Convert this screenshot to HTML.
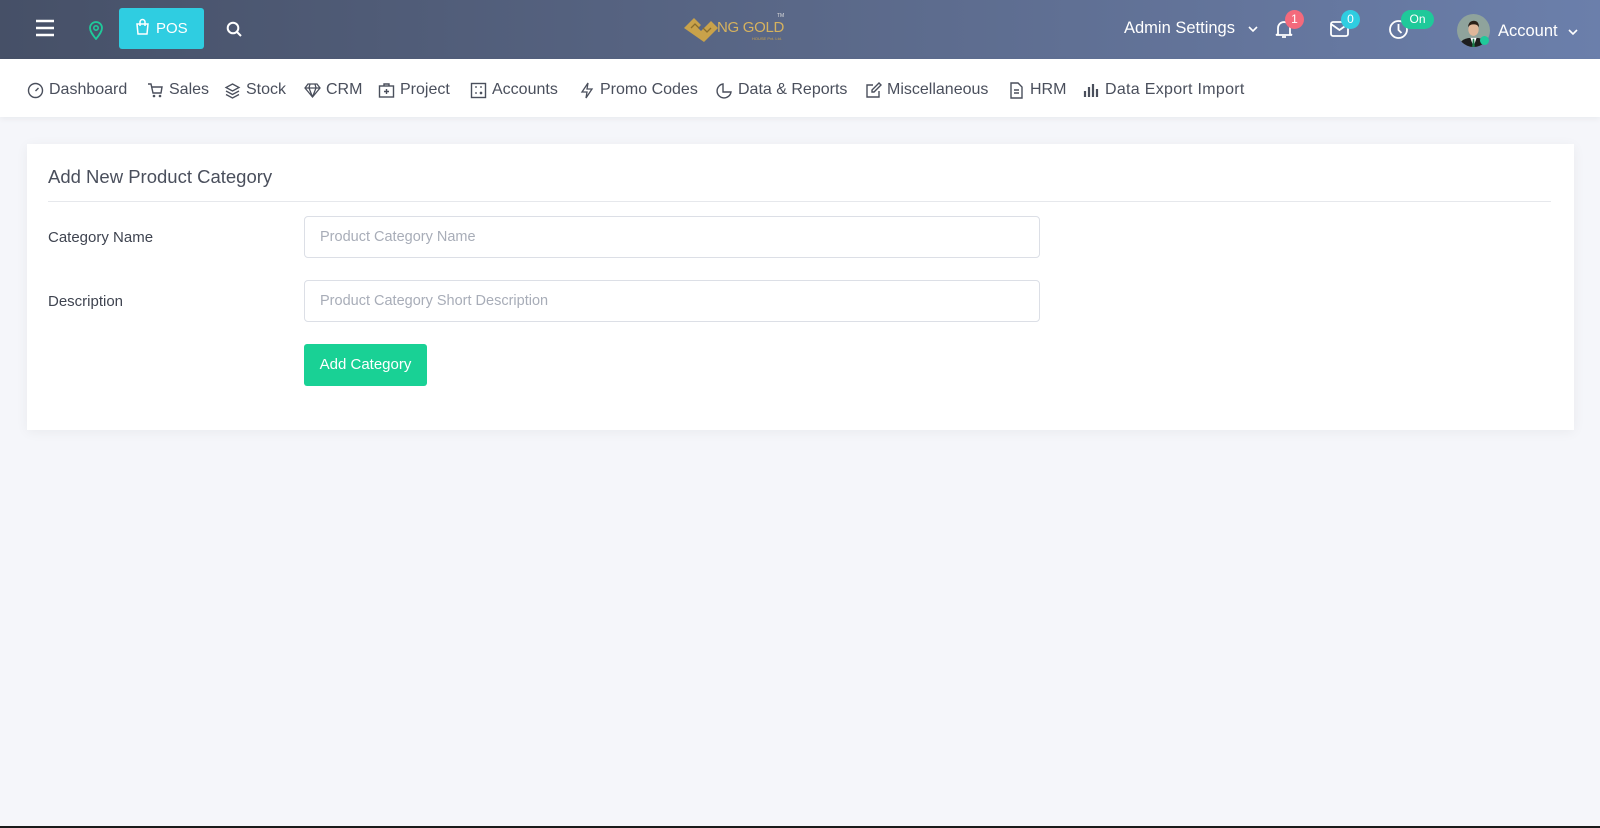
<!DOCTYPE html>
<html><head><style>
*{margin:0;padding:0;box-sizing:border-box}
body{width:1600px;height:828px;background:#f5f6fa;font-family:"Liberation Sans",sans-serif;position:relative;overflow:hidden}
.hdr{position:absolute;left:0;top:0;width:1600px;height:59px;background:linear-gradient(90deg,#465067,#5a6888 50%,#6b7fab)}
.nav{position:absolute;left:0;top:59px;width:1600px;height:58px;background:#fff;box-shadow:0 2px 6px rgba(0,0,0,.05)}
.a{position:absolute;white-space:nowrap}
.ni{position:absolute;top:80px;font-size:16px;color:#4a4f5c}
.ni svg{position:absolute;left:-22px;top:1px}
.card{position:absolute;left:27px;top:144px;width:1547px;height:286px;background:#fff;box-shadow:0 2px 12px rgba(0,0,0,.05)}
.inp{position:absolute;left:304px;width:736px;height:42px;border:1px solid #dcdfe6;border-radius:4px;font-size:14.5px;color:#a8adb8;padding:12px 15px}
.lbl{position:absolute;left:48px;font-size:15px;color:#3f4450}
.bdg{position:absolute;height:19px;border-radius:10px;color:#fff;font-size:12px;text-align:center;line-height:19px}
</style></head><body>
<div class="hdr">
<svg class="a" style="left:35px;top:19px" width="20" height="18"><path d="M1 2h18M1 9h18M1 16h18" stroke="#fff" stroke-width="2.4"/></svg>
<svg class="a" style="left:88px;top:20px" width="16" height="20" viewBox="0 0 16 20"><path d="M8 19C4 14 2 11 2 8a6 6 0 0112 0c0 3-2 6-6 11z" fill="none" stroke="#1fc99a" stroke-width="1.8"/><circle cx="8" cy="8" r="2.2" fill="none" stroke="#1fc99a" stroke-width="1.6"/></svg>
<div class="a" style="left:119px;top:8px;width:85px;height:41px;background:#2fcde1;border-radius:3px"></div>
<svg class="a" style="left:135px;top:18px" width="15" height="17"><path d="M2 6h11l-1 10H3z" fill="none" stroke="#fff" stroke-width="1.5"/><path d="M5 8V4a2.5 2.5 0 015 0v4" fill="none" stroke="#fff" stroke-width="1.5"/></svg>
<div class="a" style="left:156px;top:20px;color:#fff;font-size:15px">POS</div>
<svg class="a" style="left:226px;top:21px" width="17" height="17"><circle cx="7" cy="7" r="5.3" fill="none" stroke="#fff" stroke-width="2"/><path d="M11 11l4 4" stroke="#fff" stroke-width="2"/></svg>
<svg class="a" style="left:684px;top:14px" width="34" height="28" viewBox="0 0 34 28"><path d="M0 14L10 4l7 7-3 3 3 3 3-3 7-7 7 7-14 14z" fill="#c9a24a"/><path d="M7 14l4-4 4 4M19 14l4 4 4-4" fill="none" stroke="#8a6d2c" stroke-width="1.3"/></svg>
<div class="a" style="left:717px;top:19px;color:#d6b25e;font-size:15px;letter-spacing:-.3px">NG GOLD</div>
<div class="a" style="left:777px;top:13px;color:#ddd;font-size:5px">TM</div>
<div class="a" style="left:752px;top:36px;color:#c9a24a;font-size:4px">HOUSE Pvt. Ltd.</div>
<div class="a" style="left:1124px;top:19px;color:#fff;font-size:16.5px">Admin Settings</div>
<svg class="a" style="left:1248px;top:26px" width="10" height="7"><path d="M1 1l4 4 4-4" fill="none" stroke="#fff" stroke-width="1.6"/></svg>
<svg class="a" style="left:1274px;top:19px" width="20" height="20"><path d="M4 15V9a6 6 0 0112 0v6l2 1H2zM8 18h4" fill="none" stroke="#fff" stroke-width="1.8"/></svg>
<div class="bdg" style="left:1285px;top:10px;width:19px;background:#f46a7c">1</div>
<svg class="a" style="left:1330px;top:21px" width="19" height="16"><rect x="1" y="1" width="17" height="14" rx="2" fill="none" stroke="#fff" stroke-width="1.8"/><path d="M1 3l8.5 6L18 3" fill="none" stroke="#fff" stroke-width="1.8"/></svg>
<div class="bdg" style="left:1341px;top:10px;width:19px;background:#2fcde1">0</div>
<svg class="a" style="left:1388px;top:19px" width="21" height="21"><circle cx="10.5" cy="10.5" r="8.5" fill="none" stroke="#fff" stroke-width="1.8"/><path d="M10.5 5v6l3 3" fill="none" stroke="#fff" stroke-width="1.8"/></svg>
<div class="bdg" style="left:1401px;top:10px;width:33px;background:#1fc99a">On</div>
<svg class="a" style="left:1457px;top:14px" width="33" height="33" viewBox="0 0 32 32"><defs><clipPath id="c"><circle cx="16" cy="16" r="16"/></clipPath></defs><g clip-path="url(#c)"><rect width="32" height="32" fill="#8fa39c"/><path d="M2 32c1-7 6-9 14-9s13 2 14 9z" fill="#1e1e1e"/><path d="M13 23l3 9 3-9z" fill="#fff"/><path d="M15.3 24h1.4l.6 8h-2.6z" fill="#1a7a4a"/><ellipse cx="16" cy="15" rx="5" ry="6.2" fill="#e0b79a"/><path d="M10.8 13c0-5 3-6.5 5.5-6.5s5.2 1.5 5 6.5c-1-2.5-3-3-5.2-3s-4.3.5-5.3 3z" fill="#2a2018"/></g></svg>
<div class="a" style="left:1480px;top:36px;width:9px;height:9px;border-radius:50%;background:#1fc99a"></div>
<div class="a" style="left:1498px;top:22px;color:#fff;font-size:16.5px">Account</div>
<svg class="a" style="left:1568px;top:29px" width="10" height="7"><path d="M1 1l4 4 4-4" fill="none" stroke="#fff" stroke-width="1.6"/></svg>
</div>
<div class="nav"></div>
<div class="ni" style="left:49px;top:81px"><svg width="17" height="17"><circle cx="8.5" cy="8.5" r="7" fill="none" stroke="#4a4f5c" stroke-width="1.4"/><path d="M8.5 9l3-3" stroke="#4a4f5c" stroke-width="1.4"/></svg>Dashboard</div>
<div class="ni" style="left:169px;top:81px"><svg width="17" height="17"><path d="M1 2h3l2 9h8l1-6H5" fill="none" stroke="#4a4f5c" stroke-width="1.4"/><circle cx="7" cy="14" r="1.3" fill="#4a4f5c"/><circle cx="13" cy="14" r="1.3" fill="#4a4f5c"/></svg>Sales</div>
<div class="ni" style="left:246px;top:81px"><svg width="17" height="17"><path d="M8.5 2L15 5.5 8.5 9 2 5.5zM2 9l6.5 3.5L15 9M2 12.5L8.5 16l6.5-3.5" fill="none" stroke="#4a4f5c" stroke-width="1.3"/></svg>Stock</div>
<div class="ni" style="left:326px;top:81px"><svg width="17" height="17"><path d="M4 2h9l3 4-7.5 9L1 6zM1 6h15M6 2l-1 4 3.5 9M11 2l1 4-3.5 9" fill="none" stroke="#4a4f5c" stroke-width="1.3"/></svg>CRM</div>
<div class="ni" style="left:400px;top:81px"><svg width="17" height="17"><rect x="1.5" y="4" width="14" height="11" fill="none" stroke="#4a4f5c" stroke-width="1.4"/><path d="M6 4V2h5v2M8.5 7v5M6 9.5h5" fill="none" stroke="#4a4f5c" stroke-width="1.4"/></svg>Project</div>
<div class="ni" style="left:492px;top:81px"><svg width="17" height="17"><rect x="1.5" y="1.5" width="14" height="14" fill="none" stroke="#4a4f5c" stroke-width="1.4"/><path d="M5 5h2M10 5h2M5 11h2M10 10l2 2M12 10l-2 2" stroke="#4a4f5c" stroke-width="1.3"/></svg>Accounts</div>
<div class="ni" style="left:600px;top:81px"><svg width="17" height="17"><path d="M10 1L4 10h5l-1 6 6-9H9z" fill="none" stroke="#4a4f5c" stroke-width="1.3"/></svg>Promo Codes</div>
<div class="ni" style="left:738px;top:81px"><svg width="17" height="17"><path d="M7 2a7 7 0 108 8H7z" fill="none" stroke="#4a4f5c" stroke-width="1.4"/></svg>Data &amp; Reports</div>
<div class="ni" style="left:887px;top:81px"><svg width="17" height="17"><path d="M8 3H2v12h12V9M14 1l2 2-7 7H7V8z" fill="none" stroke="#4a4f5c" stroke-width="1.4"/></svg>Miscellaneous</div>
<div class="ni" style="left:1030px;top:81px"><svg width="17" height="17"><path d="M3 1h7l4 4v11H3z M6 8h5M6 11h5" fill="none" stroke="#4a4f5c" stroke-width="1.4"/></svg>HRM</div>
<div class="ni" style="left:1105px;top:81px;letter-spacing:.3px"><svg width="17" height="17"><path d="M2 15V9M6 15V5M10 15V2M14 15V7" stroke="#4a4f5c" stroke-width="2.2"/></svg>Data Export Import</div>
<div class="card">
<div class="a" style="left:21px;top:22px;font-size:18.5px;color:#4a4f5c">Add New Product Category</div>
<div class="a" style="left:21px;top:57px;width:1503px;height:1px;background:#e6e8ec"></div>
</div>
<div class="lbl" style="top:229px">Category Name</div>
<div class="lbl" style="top:293px">Description</div>
<div class="inp" style="top:216px">Product Category Name</div>
<div class="inp" style="top:280px">Product Category Short Description</div>
<div class="a" style="left:304px;top:344px;width:123px;height:42px;background:#19d195;border-radius:3px;color:#fff;font-size:15px;text-align:center;line-height:42px">Add Category</div>
<div class="a" style="left:0;top:826px;width:1600px;height:2px;background:#1a1a1a"></div>
</body></html>
